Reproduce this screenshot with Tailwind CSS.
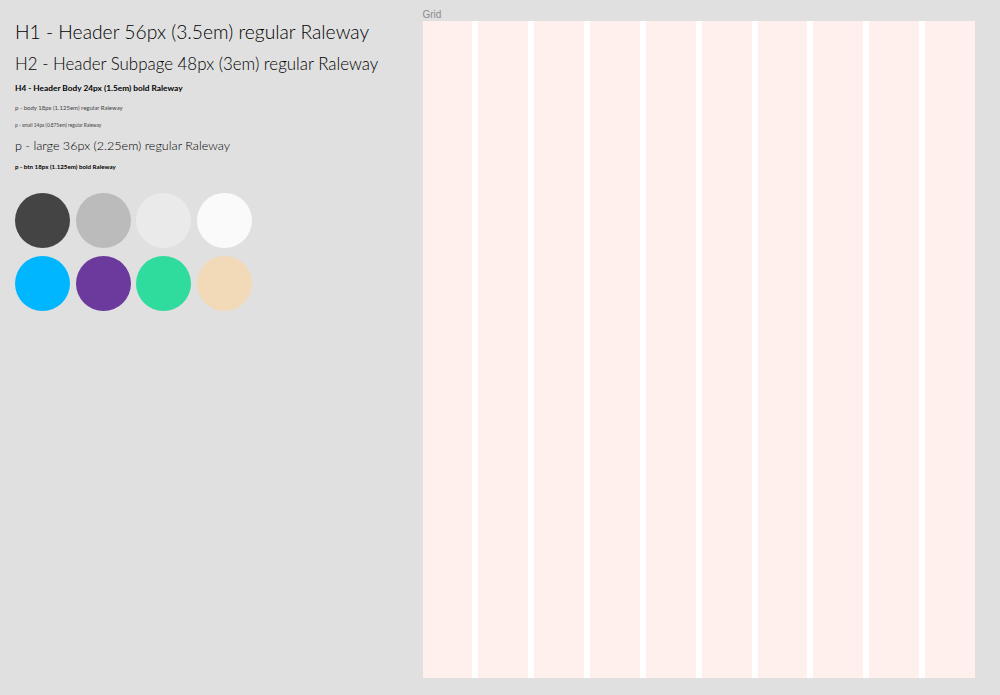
<!DOCTYPE html>
<html lang="en">
<head>
  <meta charset="UTF-8" />
  <title>Style guide</title>
  <script src="https://cdn.jsdelivr.net/npm/@tailwindcss/browser@4"></script>
</head>
<body class="bg-[#e0e0e0] h-[695px] overflow-hidden font-['Lato','Noto_Sans',sans-serif] text-black">
  <div class="flex h-full">
    <!-- Type + colours -->
    <div class="w-[422.5px] shrink-0 pl-[15px] pt-[20px]">
      <h1 class="text-[19.3px] leading-[24px] font-light">H1 - Header 56px (3.5em) regular Raleway</h1>
      <h2 class="mt-[9px] text-[16.9px] leading-[22px] font-light">H2 - Header Subpage 48px (3em) regular Raleway</h2>
      <h4 class="mt-[7px] text-[8.3px] leading-[12px] font-bold">H4 - Header Body 24px (1.5em) bold Raleway</h4>
      <p class="mt-[8px] text-[6px] leading-[12px] text-[#444]">p - body 18px (1.125em) regular Raleway</p>
      <p class="mt-[5px] text-[4.8px] leading-[12px] text-[#444]">p - small 14px (0.875em) regular Raleway</p>
      <p class="mt-[6px] text-[12.6px] leading-[18px] font-light">p - large 36px (2.25em) regular Raleway</p>
      <p class="mt-[7px] text-[6.2px] leading-[10px] font-bold">p - btn 18px (1.125em) bold Raleway</p>

      <div class="mt-[21px] grid grid-cols-[55px_55px_55px_55px] gap-x-[5.7px] gap-y-[8px]">
        <div class="size-[55px] rounded-full bg-[#444444]"></div>
        <div class="size-[55px] rounded-full bg-[#bbbbbb]"></div>
        <div class="size-[55px] rounded-full bg-[#eaeaea]"></div>
        <div class="size-[55px] rounded-full bg-[#fafafa]"></div>
        <div class="size-[55px] rounded-full bg-[#00b6ff]"></div>
        <div class="size-[55px] rounded-full bg-[#6b3a9c]"></div>
        <div class="size-[55px] rounded-full bg-[#2fdb9d]"></div>
        <div class="size-[55px] rounded-full bg-[#f2d9b8]"></div>
      </div>
    </div>

    <!-- Grid frame -->
    <div class="w-[552.5px] pt-[8px]">
      <div class="text-[10px] leading-[13px] text-[#8a8a8a] font-['Liberation_Sans',sans-serif]">Grid</div>
      <div class="h-[657px] bg-white grid grid-cols-10 gap-x-[6px]">
        <div class="bg-[#fff0ee]"></div>
        <div class="bg-[#fff0ee]"></div>
        <div class="bg-[#fff0ee]"></div>
        <div class="bg-[#fff0ee]"></div>
        <div class="bg-[#fff0ee]"></div>
        <div class="bg-[#fff0ee]"></div>
        <div class="bg-[#fff0ee]"></div>
        <div class="bg-[#fff0ee]"></div>
        <div class="bg-[#fff0ee]"></div>
        <div class="bg-[#fff0ee]"></div>
      </div>
    </div>
  </div>
</body>
</html>
